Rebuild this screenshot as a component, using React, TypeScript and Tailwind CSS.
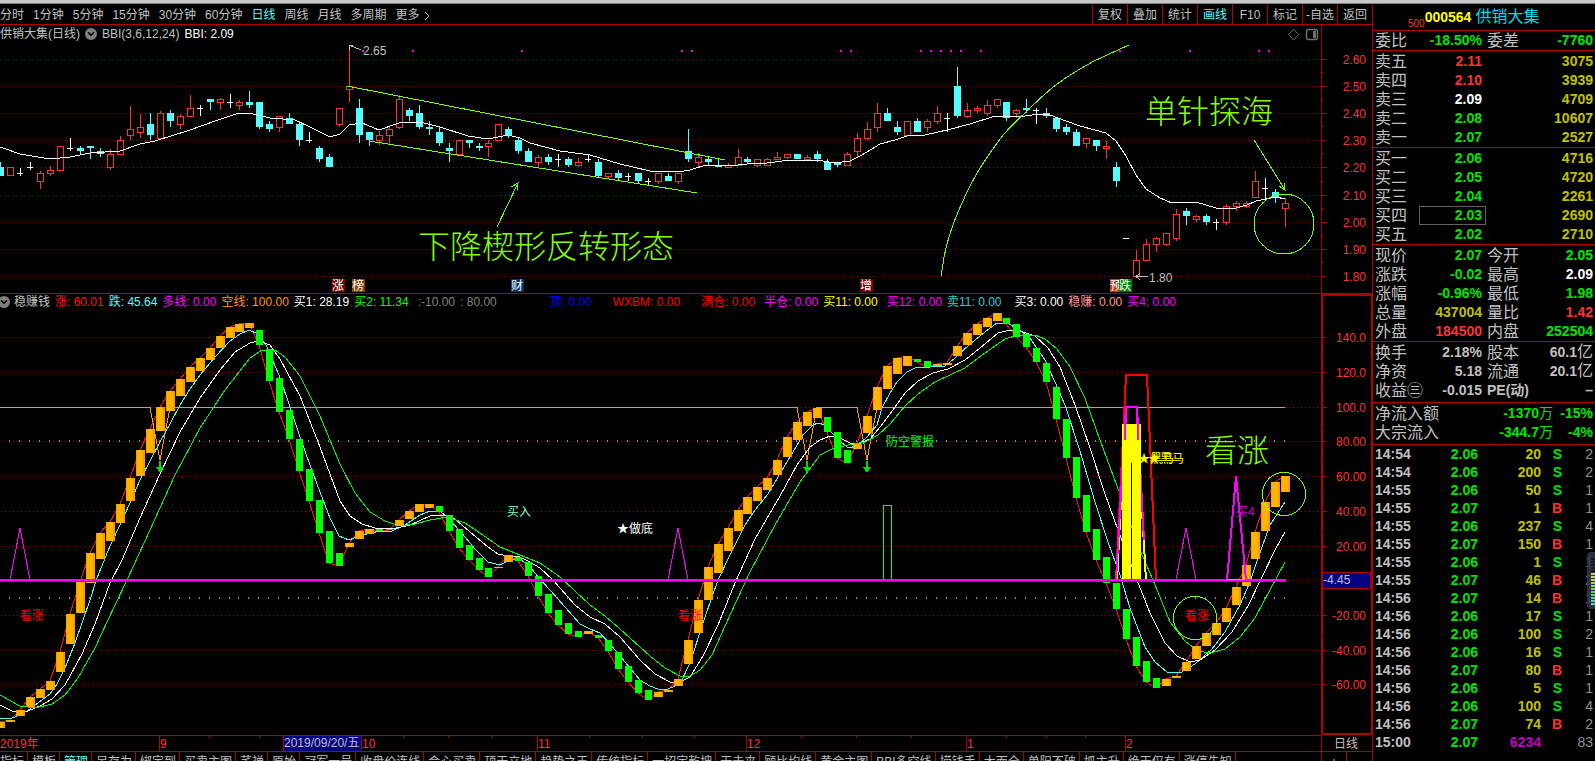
import { ChevronDown } from "lucide-react";

type CandleKind = "up" | "down" | "flat";
// high, body top, body bottom, low (chart pixels)
type Candle = [number, number, number, number, CandleKind];
// top, bottom, rising
type Bar = [number, number, boolean];

const U: CandleKind = "up";
const D: CandleKind = "down";
const F: CandleKind = "flat";

const candles: Candle[] = [
  [162, 167, 176, 176, D], [167, 167, 176, 176, U], [168, 173, 173, 176, F], [162, 167, 167, 170, F],
  [171, 173, 182, 189, U], [166, 170, 174, 176, U], [146, 146, 171, 171, U], [138, 148, 148, 151, F],
  [146, 148, 151, 154, D], [146, 146, 148, 159, D], [148, 151, 154, 157, D], [149, 154, 168, 170, U],
  [136, 140, 155, 155, U], [106, 129, 136, 140, U], [114, 127, 133, 138, U], [113, 124, 135, 140, D],
  [111, 113, 139, 139, U], [110, 113, 121, 127, D], [114, 116, 125, 129, U], [95, 108, 117, 117, U],
  [105, 108, 108, 116, F], [99, 99, 102, 110, D], [98, 99, 103, 110, U], [94, 102, 102, 108, F],
  [100, 102, 106, 110, U], [91, 102, 105, 108, D], [102, 102, 127, 129, D], [121, 124, 129, 132, D],
  [116, 116, 128, 132, U], [113, 118, 124, 124, D], [121, 124, 140, 146, D], [132, 140, 140, 143, F],
  [146, 148, 159, 162, D], [154, 157, 167, 167, D], [108, 108, 125, 127, U], [47, 86, 90, 102, U],
  [99, 108, 135, 143, D], [132, 132, 140, 146, D], [131, 135, 141, 145, U], [127, 129, 136, 145, U],
  [95, 99, 128, 129, U], [108, 110, 116, 121, D], [105, 113, 127, 129, D], [121, 127, 129, 135, D],
  [127, 132, 143, 146, D], [143, 148, 151, 162, D], [140, 140, 155, 155, U], [140, 140, 143, 148, D],
  [143, 146, 148, 151, D], [140, 143, 147, 157, U], [124, 124, 141, 141, U], [127, 129, 135, 138, D],
  [137, 140, 151, 154, D], [148, 151, 162, 162, D], [155, 157, 163, 167, U], [154, 157, 162, 165, D],
  [154, 159, 159, 167, F], [157, 159, 165, 167, D], [158, 162, 166, 167, U], [154, 159, 159, 162, F],
  [159, 162, 176, 177, D], [173, 173, 177, 178, U], [170, 173, 178, 181, D], [173, 176, 176, 181, F],
  [173, 173, 181, 184, D], [178, 181, 181, 186, F], [173, 173, 182, 184, U], [173, 176, 181, 181, D],
  [173, 173, 182, 184, U], [129, 151, 159, 162, D], [153, 157, 163, 167, U], [157, 159, 162, 166, D],
  [159, 165, 167, 167, D], [163, 165, 168, 168, U], [149, 157, 166, 166, U], [157, 159, 162, 164, D],
  [159, 159, 166, 167, U], [158, 159, 166, 166, U], [152, 157, 160, 160, U], [154, 154, 158, 159, U],
  [154, 154, 159, 159, D], [155, 157, 160, 161, U], [151, 154, 159, 162, D], [159, 162, 170, 170, D],
  [162, 162, 165, 167, D], [152, 154, 166, 166, U], [133, 138, 152, 157, U], [122, 129, 139, 140, U],
  [103, 113, 128, 132, U], [108, 113, 121, 121, D], [121, 127, 132, 135, D], [121, 121, 136, 136, U],
  [118, 121, 132, 132, D], [119, 121, 128, 132, U], [106, 113, 122, 124, U], [113, 118, 118, 132, F],
  [67, 86, 116, 118, D], [103, 110, 117, 118, U], [106, 108, 111, 113, U], [100, 105, 114, 116, U],
  [99, 99, 106, 108, U], [102, 102, 118, 121, D], [109, 110, 114, 118, U], [99, 108, 110, 113, D],
  [108, 110, 110, 124, F], [108, 113, 116, 118, D], [118, 118, 129, 132, D], [124, 127, 132, 135, D],
  [129, 132, 146, 146, D], [138, 138, 144, 148, U], [140, 140, 146, 151, D], [141, 146, 149, 159, U],
  [162, 167, 181, 187, D], [238, 238, 238, 239, F], [250, 260, 277, 277, U], [239, 244, 261, 261, U],
  [237, 238, 245, 252, U], [233, 233, 245, 246, U], [209, 214, 239, 241, U], [208, 211, 216, 225, D],
  [215, 216, 220, 222, U], [214, 216, 222, 225, D], [219, 222, 222, 230, F], [204, 206, 223, 225, U],
  [201, 203, 207, 211, U], [201, 203, 207, 208, U], [171, 181, 198, 198, U], [178, 188, 188, 200, F],
  [189, 192, 197, 203, D], [198, 203, 209, 227, U],
];

const o = true;
const g = false;

const bars: Bar[] = [
  [722, 728, o], [720, 722, o], [710, 716, o], [697, 707, o], [689, 698, o], [681, 690, o], [652, 672, o],
  [614, 644, o], [582, 613, o], [553, 583, o], [533, 559, o], [522, 541, o], [504, 523, o], [478, 501, o],
  [450, 476, o], [429, 453, o], [407, 431, o], [391, 411, o], [379, 396, o], [367, 382, o], [358, 371, o],
  [348, 360, o], [336, 348, o], [327, 338, o], [324, 332, o], [323, 328, o], [330, 345, g], [349, 381, g],
  [378, 412, g], [410, 439, g], [439, 471, g], [469, 501, g], [500, 533, g], [531, 563, g], [553, 566, g],
  [543, 547, o], [531, 539, o], [529, 534, o], [529, 531, g], [529, 530, g], [520, 526, o], [511, 519, o],
  [504, 512, o], [504, 508, o], [506, 512, g], [515, 531, g], [529, 548, g], [545, 560, g], [558, 570, g],
  [568, 577, g], [567, 568, o], [555, 562, o], [557, 561, g], [562, 576, g], [576, 596, g], [594, 613, g],
  [610, 625, g], [623, 634, g], [631, 637, g], [631, 634, o], [635, 638, g], [640, 651, g], [652, 669, g],
  [666, 682, g], [680, 693, g], [690, 700, g], [692, 697, o], [690, 692, o], [679, 686, o], [640, 664, o],
  [600, 633, o], [567, 600, o], [544, 573, o], [528, 551, o], [510, 531, o], [497, 514, o], [487, 501, o],
  [478, 490, o], [460, 475, o], [437, 457, o], [422, 440, o], [412, 426, o], [408, 418, o], [417, 432, g],
  [432, 458, g], [450, 463, g], [444, 449, o], [416, 433, o], [387, 410, o], [366, 389, o], [358, 374, o],
  [356, 366, o], [359, 362, g], [361, 367, g], [364, 366, o], [363, 365, o], [346, 356, o], [333, 345, o],
  [324, 335, o], [318, 327, o], [313, 321, o], [318, 324, g], [324, 337, g], [334, 347, g], [348, 362, g],
  [363, 382, g], [387, 419, g], [419, 458, g], [457, 498, g], [495, 532, g], [529, 560, g], [557, 583, g],
  [583, 609, g], [609, 639, g], [637, 666, g], [661, 682, g], [678, 688, g], [679, 686, o], [676, 678, o],
  [662, 671, o], [646, 659, o], [633, 646, o], [623, 635, o], [608, 622, o], [587, 605, o], [565, 586, o],
  [532, 559, o], [502, 531, o], [482, 507, o], [476, 492, o],
];

const bbiLine =
  "0,147 20,154 50,159 70,157 90,153 120,151 140,144 155,141 190,130 215,121 239,113 249,113 270,118 295,120 310,127 330,137 340,134 349,125 362,123 379,130 399,123 420,122 440,127 468,136 488,139 508,135 520,138 530,143 560,151 590,155 620,164 650,171 678,172 690,170 706,165 730,166 747,164 767,163 790,160 817,160 835,163 850,161 862,155 880,144 895,140 907,136 925,135 947,130 970,124 995,116 1025,116 1040,114 1050,115 1066,121 1080,126 1106,133 1116,141 1126,156 1136,175 1146,189 1160,198 1172,203 1196,202 1216,208 1236,208 1247,205 1256,201 1276,197 1285,199";

const fastLine =
  "0,718 12,718 20,715 30,709 50,694 57,684 65,668 75,643 90,600 97,578 110,546 120,525 130,503 140,480 150,461 160,442 170,424 180,405 190,389 200,375 215,357 230,341 240,334 249,330 258,334 266,345 279,375 290,407 300,437 310,465 320,492 330,518 339,536 349,540 362,535 380,531 392,531 405,525 420,515 430,511 440,511 447,517 460,531 475,549 488,562 500,565 510,560 520,559 530,567 540,579 550,590 565,607 580,624 590,629 600,633 610,644 625,662 640,680 650,686 658,689 668,689 680,684 690,663 705,617 718,580 730,555 745,525 755,510 768,494 778,477 790,457 803,435 813,425 818,423 825,425 832,433 840,441 848,448 857,446 867,437 877,425 882,408 890,393 897,382 907,372 915,368 945,366 955,358 970,344 985,332 997,323 1007,323 1018,329 1030,338 1045,360 1055,382 1065,405 1080,451 1095,502 1108,542 1120,575 1130,608 1145,647 1155,662 1167,672 1180,673 1195,664 1212,649 1225,632 1240,605 1250,582 1258,558 1270,525 1285,502";

const midLine =
  "0,705 12,711 28,711 40,706 52,699 65,685 82,654 95,624 110,583 122,560 140,518 160,474 180,432 200,398 220,370 235,352 250,343 258,341 270,345 280,359 300,396 320,447 340,501 350,516 362,524 375,528 392,529 410,525 430,516 445,515 455,519 470,532 488,547 498,554 508,556 518,556 530,562 540,568 553,580 575,605 590,617 605,624 620,637 640,660 655,674 670,682 680,682 690,677 703,656 718,625 735,583 755,539 780,496 797,465 810,447 820,440 830,436 840,438 850,443 860,443 870,439 880,427 890,414 905,393 918,381 933,373 948,369 965,360 980,348 998,333 1010,330 1020,331 1035,336 1048,348 1060,367 1075,405 1090,448 1105,494 1118,530 1135,575 1150,613 1165,643 1177,656 1190,662 1200,660 1215,650 1232,632 1248,606 1262,577 1275,550 1285,532";

const slowLine =
  "0,695 20,706 35,708 52,704 65,695 78,678 95,648 115,605 128,578 150,530 175,475 200,428 225,390 250,358 262,350 275,350 285,357 300,376 320,416 340,464 355,493 370,512 385,521 400,526 415,524 430,520 447,517 465,523 480,533 500,547 520,555 540,563 560,577 590,605 605,616 620,629 650,656 665,668 680,676 690,676 700,670 712,655 730,615 750,572 775,525 800,482 820,455 832,449 848,445 865,442 878,435 890,424 905,406 918,394 935,382 950,375 965,368 985,353 1005,339 1018,335 1035,335 1045,339 1057,349 1070,367 1085,398 1100,440 1120,494 1140,550 1153,580 1170,622 1185,641 1198,651 1210,653 1225,649 1240,637 1255,618 1270,590 1285,562";

const priceAxis: [string, number][] = [
  ["2.60", 59], ["2.50", 86], ["2.40", 113], ["2.30", 140], ["2.20", 167],
  ["2.10", 195], ["2.00", 222], ["1.90", 249], ["1.80", 276],
];

const indicatorAxis: [string, number][] = [
  ["140.0", 337], ["120.0", 372], ["100.0", 407], ["80.00", 441], ["60.00", 476],
  ["40.00", 511], ["20.00", 546], ["-20.00", 615], ["-40.00", 650], ["-60.00", 684],
];

const signalDots = [362, 412, 521, 681, 691, 840, 850, 920, 930, 940, 950, 960, 980, 1119, 1189, 1258, 1268];

const newsTags = [
  { text: "涨", x: 332, fill: "#800000" },
  { text: "榜", x: 352, fill: "#804000" },
  { text: "财", x: 511, fill: "#003366" },
  { text: "增", x: 860, fill: "#800000" },
  { text: "预", x: 1110, fill: "#c04000" },
  { text: "跌", x: 1119, fill: "#008000" },
];

const months: [string, number][] = [["9", 159], ["10", 361], ["11", 537], ["12", 746], ["1", 966], ["2", 1125]];
const weekTicks = [209, 259, 403, 448, 492, 589, 642, 694, 801, 856, 911, 1006, 1046, 1085];

const legend = [
  { text: "涨: 60.01", style: "text-[#ff1414]" },
  { text: "跌: 45.64", style: "text-[#54fcfc]" },
  { text: "多线: 0.00", style: "text-[#ff00ff]" },
  { text: "空线: 100.00", style: "text-[#ff9900]" },
  { text: "买1: 28.19", style: "text-white" },
  { text: "买2: 11.34", style: "text-[#00ff00]" },
  { text: ":-10.00", style: "text-[#808080] ml-1" },
  { text: ": 80.00", style: "text-[#808080]" },
  { text: "顶: 0.00", style: "text-[#0000ff] ml-12" },
  { text: "WXBM: 0.00", style: "text-[#ff0000] ml-4" },
  { text: "满仓: 0.00", style: "text-[#ff0000] ml-4" },
  { text: "半仓: 0.00", style: "text-[#ff00ff] ml-1" },
  { text: "买11: 0.00", style: "text-[#ffff00]" },
  { text: "买12: 0.00", style: "text-[#ff00ff] ml-1" },
  { text: "卖11: 0.00", style: "text-[#33cccc]" },
  { text: "买3: 0.00", style: "text-white ml-2" },
  { text: "稳赚: 0.00", style: "text-[#ff9a9a]" },
  { text: "买4: 0.00", style: "text-[#ff00ff]" },
];

const periods = ["分时", "1分钟", "5分钟", "15分钟", "30分钟", "60分钟", "日线", "周线", "月线", "多周期", "更多"];
const tools = ["复权", "叠加", "统计", "画线", "F10", "标记", "-自选", "返回"];
const templates = [
  "指标", "模板", "管理", "另存为", "绑定到", "买卖主图", "芊禅", "原始", "冠军一号", "收盘价连线", "会心买卖",
  "顶天立地", "趋势之王", "传统指标", "一招定乾坤", "无未来", "顾比均线", "黄金主图", "BBI多空线", "捞钱手",
  "大而全", "单阳不破", "抓主升", "绝天仅有", "涨停先知",
];

const RED = "text-[#ff3232]";
const GREEN = "text-[#00e600]";
const WHITE = "text-white";
const YELLOW = "text-[#c0c000]";
const GRAY = "text-[#c0c0c0]";

const asks = [
  ["卖五", "2.11", "3075", RED],
  ["卖四", "2.10", "3939", RED],
  ["卖三", "2.09", "4709", WHITE],
  ["卖二", "2.08", "10607", GREEN],
  ["卖一", "2.07", "2527", GREEN],
];
const bids = [
  ["买一", "2.06", "4716", GREEN],
  ["买二", "2.05", "4720", GREEN],
  ["买三", "2.04", "2261", GREEN],
  ["买四", "2.03", "2690", GREEN],
  ["买五", "2.02", "2710", GREEN],
];

const balance = [["委比", "-18.50%", GREEN, "委差", "-7760", GREEN]];
const quote = [
  ["现价", "2.07", GREEN, "今开", "2.05", GREEN],
  ["涨跌", "-0.02", GREEN, "最高", "2.09", WHITE],
  ["涨幅", "-0.96%", GREEN, "最低", "1.98", GREEN],
  ["总量", "437004", YELLOW, "量比", "1.42", RED],
  ["外盘", "184500", RED, "内盘", "252504", GREEN],
];
const finance = [
  ["换手", "2.18%", GRAY, "股本", "60.1亿", GRAY],
  ["净资", "5.18", GRAY, "流通", "20.1亿", GRAY],
  ["收益㊂", "-0.015", GRAY, "PE(动)", "–", GRAY],
];

const ticks = [
  ["14:54", "2.06", "20", "S", "2"],
  ["14:54", "2.06", "200", "S", "2"],
  ["14:55", "2.06", "50", "S", "1"],
  ["14:55", "2.07", "1", "B", "1"],
  ["14:55", "2.06", "237", "S", "4"],
  ["14:55", "2.07", "150", "B", "1"],
  ["14:55", "2.06", "1", "S", "1"],
  ["14:55", "2.07", "46", "B", "2"],
  ["14:56", "2.07", "14", "B", "1"],
  ["14:56", "2.06", "17", "S", "1"],
  ["14:56", "2.06", "100", "S", "2"],
  ["14:56", "2.06", "16", "S", "1"],
  ["14:56", "2.07", "80", "B", "1"],
  ["14:56", "2.06", "5", "S", "1"],
  ["14:56", "2.06", "100", "S", "4"],
  ["14:56", "2.07", "74", "B", "2"],
  ["15:00", "2.07", "6234", "", "83"],
];

const xAt = (i: number) => Math.round(0.4 + 9.961 * i);

const CandleShape = ({ index, candle }: { index: number; candle: Candle }) => {
  const [high, top, bottom, low, kind] = candle;
  const x = xAt(index);
  if (kind === "flat") {
    return (
      <g fill="#ffffff">
        <rect x={x} y={high} width="1" height={low - high} />
        <rect x={x - 3} y={top} width="6" height="1" />
      </g>
    );
  }
  if (kind === "down") {
    return (
      <g fill="#54fcfc">
        <rect x={x} y={high} width="1" height={low - high} />
        <rect x={x - 3} y={top} width="7" height={bottom - top} />
      </g>
    );
  }
  return (
    <g>
      <rect x={x} y={high} width="1" height={low - high} fill="#ff3232" />
      <rect x={x - 2.5} y={top + 0.5} width="6" height={Math.max(bottom - top - 1, 1)} fill="#000000" stroke="#ff3232" />
    </g>
  );
};

const Grid = ({ rows }: { rows: number[] }) => (
  <g stroke="#b00000" strokeDasharray="1 3">
    {rows.map((y) => (
      <line key={y} x1="1" x2="1320" y1={y + 0.5} y2={y + 0.5} />
    ))}
  </g>
);

const AxisLabels = ({ items }: { items: [string, number][] }) => (
  <g>
    {items.map(([label, y]) => (
      <g key={label}>
        <rect x="1322" y={y} width="5" height="1" fill="#b00000" />
        <text x="1366" y={y + 5} textAnchor="end" fill="#ff3232">{label}</text>
      </g>
    ))}
  </g>
);

const CollapseIcon = () => (
  <button aria-label="展开" className="flex h-3 w-3 shrink-0 items-center justify-center rounded-full bg-[#808080] text-black">
    <ChevronDown className="h-2.5 w-2.5" strokeWidth={4} />
  </button>
);

const PriceChart = () => (
  <div className="relative border-b border-[#b00000]">
    <svg viewBox="0 25 1372 268" className="block w-full text-[12px]" shapeRendering="crispEdges">
      <Grid rows={priceAxis.map(([, y]) => y)} />
      {candles.map((c, i) => (
        <CandleShape key={i} index={i} candle={c} />
      ))}
      <polyline points={bbiLine} fill="none" stroke="#ffffff" />
      {signalDots.map((x) => (
        <rect key={x} x={x} y="50" width="2" height="2" fill="#ff00ff" />
      ))}

      {/* drawing tools */}
      <g fill="none" stroke="#80ff00">
        <path d="M347 86L725 160M369 141L697 193" />
        <path d="M497 227L518 183M511 187L518 183L517 190" />
        <path d="M941 276Q943 264 944 257Q948 238 954 222Q960 207 967 192Q973 180 980 168Q991 151 1003 135Q1014 123 1027 111Q1040 98 1053 87Q1066 77 1080 69Q1093 61 1107 55L1129 45" />
        <path d="M1254 140L1285 190M1279 186L1285 190L1284 183" />
        <circle cx="1284" cy="224" r="30" />
      </g>
      <g fill="#80ff00" className="text-[32px] font-light">
        <text x="418" y="258">下降楔形反转形态</text>
        <text x="1145" y="123">单针探海</text>
      </g>

      <g fill="none" stroke="#c0c0c0">
        <path d="M349 45L361 50M349 50V45H353" />
        <path d="M1136 276.5H1148M1140 273L1136 276.5L1140 280" />
      </g>
      <text x="363" y="55" fill="#c0c0c0">2.65</text>
      <text x="1149" y="282" fill="#c0c0c0">1.80</text>

      {newsTags.map((tag) => (
        <g key={tag.x}>
          <rect x={tag.x} y="279" width="13" height="13" fill={tag.fill} />
          <text x={tag.x} y="290" fill="#ffffff">{tag.text}</text>
        </g>
      ))}

      <g fill="none" stroke="#707070" shapeRendering="auto">
        <path d="M1293.5 29L1298.5 34.5L1293.5 40L1288.5 34.5Z" />
        <rect x="1306.5" y="29.5" width="11" height="10" rx="2" strokeWidth="1.5" />
        <rect x="1313" y="31" width="3" height="7" fill="#707070" stroke="none" />
      </g>

      <rect x="1321" y="25" width="1" height="268" fill="#b00000" />
      {[72, 99, 126, 153, 181, 208, 235, 262].map((y) => (
        <rect key={y} x="1322" y={y} width="2" height="1" fill="#b00000" />
      ))}
      <AxisLabels items={priceAxis} />
    </svg>
    <div className="absolute left-0 top-0 flex h-[18px] items-center gap-[5px] whitespace-nowrap text-[#c0c0c0]">
      <span>供销大集(日线)</span>
      <CollapseIcon />
      <span>BBI(3,6,12,24)</span>
      <span className="text-white">BBI: 2.09</span>
    </div>
  </div>
);

const IndicatorChart = () => (
  <div className="relative">
    <svg viewBox="0 294 1372 441" className="block w-full text-[12px]" shapeRendering="crispEdges">
      <Grid rows={[...indicatorAxis.map(([, y]) => y), 580]} />
      <g fill="#909090">
        {candles.slice(1).map((_, i) => (
          <g key={i}>
            <rect x={xAt(i + 1) - 1} y="440" width="1" height="2" />
            <rect x={xAt(i + 1) - 1} y="597" width="1" height="2" />
          </g>
        ))}
      </g>

      <polyline
        points={bars.map(([top, bottom, rising], i) => `${xAt(i)},${rising ? top : bottom}`).join(" ")}
        fill="none"
        stroke="#ff1414"
      />
      <path
        d="M0 407.5H150L160 460L170 407.5H797L807 460L817 407.5H857L867 460L877 407.5H1285"
        fill="none"
        stroke="#ff9900"
      />
      <polyline points={fastLine} fill="none" stroke="#54fcfc" />
      <polyline points={midLine} fill="none" stroke="#ffffff" />
      <polyline points={slowLine} fill="none" stroke="#00ff00" />

      {bars.map(([top, bottom, rising], i) =>
        rising ? (
          <g key={i}>
            <rect x={xAt(i) - 4} y={top} width="9" height={bottom - top} fill="#ff9900" />
            <rect x={xAt(i) - 3} y={top} width="6" height={bottom - top} fill="#ffb400" />
          </g>
        ) : (
          <rect key={i} x={xAt(i) - 3} y={top} width="7" height={bottom - top} fill="#00ff00" />
        )
      )}

      <g fill="#00dc00">
        {[160, 807, 867].map((x) => (
          <path key={x} d={`M${x - 1} 461h2v6h3l-4 6l-4 -6h3z`} />
        ))}
      </g>

      {/* dark horse signal */}
      <g fill="none" strokeWidth="2">
        <path d="M1116 580L1126 375H1147L1156 580" stroke="#ff0000" />
        <path d="M1117 580L1124 440M1138 440L1146 580" stroke="#ffff00" />
        <path d="M1116 580L1126 407H1137L1144 540" stroke="#ff00ff" />
      </g>
      <path d="M1122 424H1141V580H1132V463H1131V580H1122Z" fill="#ffff00" />
      <path d="M1125 440L1126 407H1137L1138 440" fill="none" stroke="#ff00ff" strokeWidth="2" />

      <rect x="883.5" y="505.5" width="8" height="74" fill="none" stroke="#00ff00" />
      <g fill="none" stroke="#ff00ff">
        <path d="M10 580L20 528L30 580M668 580L678 528L688 580M1176 580L1186 528L1196 580" />
        <path d="M1227 580L1236 476L1246 580" strokeWidth="2" />
      </g>
      <rect x="0" y="579" width="1286" height="2" fill="#ff00ff" />
      <rect x="0" y="581" width="1286" height="1" fill="#ff0000" />
      <rect x="1227" y="579" width="18" height="1" fill="#a0b0a0" />

      <g fill="none" stroke="#80ff00">
        <circle cx="1284" cy="494" r="21.5" />
        <circle cx="1195" cy="618" r="21.5" />
      </g>
      <text x="1205" y="462" fill="#80ff00" className="text-[32px] font-light">看涨</text>

      <text x="507" y="516" fill="#80ffc0">买入</text>
      <text x="617" y="533" fill="#ffffff">★做底</text>
      <text x="886" y="446" fill="#00ff00">防空警报</text>
      <text x="1138" y="463" fill="#ffff00">★黑马</text>
      <text x="1148" y="463" fill="#ffff00">★黑马</text>
      <text x="1236" y="516" fill="#d000d0">买4</text>
      <g fill="#ff0000">
        <text x="20" y="620">看涨</text>
        <text x="678" y="620">看涨</text>
        <text x="1185" y="620">看涨</text>
      </g>

      <rect x="1322" y="295" width="50" height="439" fill="none" stroke="#b00000" strokeWidth="2" />
      {[355, 389, 424, 459, 494, 528, 563, 598, 632, 667].map((y) => (
        <rect key={y} x="1323" y={y} width="1" height="1" fill="#b00000" />
      ))}
      <AxisLabels items={indicatorAxis} />
      <rect x="1322.5" y="572.5" width="48" height="16" fill="#000080" stroke="#b00000" />
      <text x="1323" y="584" fill="#c0c0c0">-4.45</text>
    </svg>
    <div className="absolute left-0 top-0 flex h-4 items-center gap-[5px] whitespace-nowrap">
      <div className="-ml-0.5 flex items-center gap-1 text-[#c0c0c0]">
        <CollapseIcon />
        <span>稳赚钱</span>
      </div>
      {legend.map((item) => (
        <span key={item.text} className={item.style}>{item.text}</span>
      ))}
    </div>
  </div>
);

const TimeAxis = () => (
  <svg viewBox="0 735 1372 16" className="block w-full text-[12px]" shapeRendering="crispEdges">
    <rect x="0" y="735" width="1322" height="1" fill="#b00000" />
    <rect x="1321" y="735" width="1" height="16" fill="#b00000" />
    {weekTicks.map((x) => (
      <rect key={x} x={x} y="736" width="1" height="2" fill="#b00000" />
    ))}
    <text x="0" y="748" fill="#ff3232">2019年</text>
    {months.map(([label, x]) => (
      <g key={label}>
        <rect x={x} y="735" width="1" height="16" fill="#b00000" />
        <text x={x + 1} y="748" fill="#ff3232">{label}</text>
      </g>
    ))}
    <rect x="283.5" y="735.5" width="78" height="16" fill="#000080" stroke="#b00000" />
    <text x="284" y="747" fill="#c0c0c0">2019/09/20/五</text>
    <text x="1334" y="748" fill="#c0c0c0">日线</text>
  </svg>
);

const Toolbar = () => (
  <div className="flex h-[21px] items-stretch justify-between border-b border-[#b00000] text-[#c0c0c0]">
    <nav className="flex items-center gap-[9px] whitespace-nowrap pt-0.5">
      {periods.map((p) => (
        <button key={p} className={p === "日线" ? "text-[#54fcfc]" : ""}>
          {p}
          {p === "更多" && (
            <svg viewBox="0 0 6 10" className="ml-1 inline h-2.5 w-1.5" fill="none" stroke="currentColor">
              <path d="M1 1L5 5L1 9" />
            </svg>
          )}
        </button>
      ))}
    </nav>
    <div className="flex whitespace-nowrap">
      {tools.map((t) => (
        <button
          key={t}
          className={`w-[35px] border-l border-[#b00000] pt-0.5 text-center ${t === "画线" ? "text-[#54fcfc]" : ""}`}
        >
          {t}
        </button>
      ))}
    </div>
  </div>
);

const TemplateBar = () => (
  <div className="flex h-5 justify-between border-t border-[#b00000] leading-[18px] text-[#c0c0c0]">
    <div className="-ml-1 flex min-w-0 whitespace-nowrap">
      {templates.map((t) => (
        <button key={t} className={`border-r border-[#b00000] pl-1 pr-[3px] ${t === "管理" ? "text-[#54fcfc]" : ""}`}>
          {t}
        </button>
      ))}
    </div>
    <div className="flex shrink-0">
      <button className="w-[25px] border-l border-[#b00000]">+</button>
      <button className="w-[26px] border-l border-[#b00000]">−</button>
    </div>
  </div>
);

const BookTable = ({ rows }: { rows: string[][] }) => (
  <table className="w-full table-fixed border-collapse">
    <tbody>
      {rows.map(([label, price, volume, color]) => (
        <tr key={label} className="h-[19px] leading-[19px]">
          <td className="w-[50px] text-base leading-[19px] text-[#c0c0c0]">{label}</td>
          <td className={`relative w-[57px] text-right font-bold ${color}`}>
            {price}
            {label === "买四" && <span className="absolute -left-1.5 -right-1 inset-y-0 border border-[#606060]" />}
          </td>
          <td className="text-right font-bold text-[#c0c000]">{volume}</td>
        </tr>
      ))}
    </tbody>
  </table>
);

const PairTable = ({ rows }: { rows: string[][] }) => (
  <table className="w-full table-fixed border-collapse">
    <tbody>
      {rows.map(([l1, v1, c1, l2, v2, c2]) => (
        <tr key={l1} className="h-[19px] whitespace-nowrap leading-[19px]">
          <td className="w-[50px] text-base leading-[19px] text-[#c0c0c0]">{l1}</td>
          <td className={`w-[57px] text-right font-bold ${c1}`}>{v1}</td>
          {l2.startsWith("PE") ? (
            <td className="w-[50px] pl-[5px] font-bold text-[#c0c0c0]">{l2}</td>
          ) : (
            <td className="w-[50px] pl-[5px] text-base leading-[19px] text-[#c0c0c0]">{l2}</td>
          )}
          <td className={`text-right font-bold ${c2}`}>
            {v2.replace("亿", "")}
            {v2.endsWith("亿") && <span className="text-base font-normal leading-none">亿</span>}
          </td>
        </tr>
      ))}
    </tbody>
  </table>
);

const FlowTable = () => (
  <table className="w-full table-fixed border-collapse">
    <tbody>
      {[
        ["净流入额", "-1370", "-15%"],
        ["大宗流入", "-344.7", "-4%"],
      ].map(([label, amount, percent]) => (
        <tr key={label} className="h-[19px] whitespace-nowrap font-bold leading-[19px] text-[#00e600]">
          <td className="w-[70px] text-base font-normal leading-[19px] text-[#c0c0c0]">{label}</td>
          <td className="w-[108px] text-right">
            {amount}
            <span className="font-normal">万</span>
          </td>
          <td className="text-right">{percent}</td>
        </tr>
      ))}
    </tbody>
  </table>
);

const TickTable = () => (
  <table className="w-full table-fixed border-collapse">
    <tbody>
      {ticks.map(([time, price, volume, side, count], i) => (
        <tr key={i} className="h-[18px] font-bold leading-[18px]">
          <td className="w-[50px] text-[#c0c0c0]">{time}</td>
          <td className="w-[53px] text-right text-[#00e600]">{price}</td>
          <td className={`w-[63px] text-right ${side ? "text-[#c0c000]" : "text-[#c000c0]"}`}>{volume}</td>
          <td className={`w-[21px] text-right ${side === "B" ? "text-[#ff3232]" : "text-[#00e600]"}`}>{side}</td>
          <td className="text-right font-normal text-[#909090]">{count}</td>
        </tr>
      ))}
    </tbody>
  </table>
);

// small level meter docked on the right edge
const LevelMeter = () => (
  <div className="absolute right-0 top-[548px] flex h-[57px] w-2 flex-col items-end gap-px rounded-l bg-[#30344a]/90 pt-1.5">
    {Array.from({ length: 16 }, (_, i) => (
      <div
        key={i}
        className="h-0.5 w-1 shrink-0"
        style={{ backgroundColor: i < 5 ? "#15171f" : `hsl(${55 + (i - 5) * 11} 60% 60%)` }}
      />
    ))}
  </div>
);

const QuotePanel = () => (
  <aside className="relative w-[223px] shrink-0 border-l border-[#b00000] text-[14px]">
    <div className="flex h-[27px] items-center border-b border-[#b00000] pl-[35px] leading-5">
      <span className="self-end text-[10px] leading-3 text-[#ff3232]">500</span>
      <span className="font-bold text-[#ffff00]">000564</span>
      <span className="pl-1 text-base leading-5 text-[#00dcf0]">供销大集</span>
    </div>
    <div className="border-b border-[#b00000] px-0.5">
      <PairTable rows={balance} />
    </div>
    <div className="border-b border-[#b00000] px-0.5 pt-px">
      <BookTable rows={asks} />
    </div>
    <div className="border-b border-[#b00000] px-0.5 pt-px">
      <BookTable rows={bids} />
    </div>
    <div className="border-b border-[#b00000] px-0.5 pt-px">
      <PairTable rows={quote} />
    </div>
    <div className="border-b border-[#b00000] px-0.5 pt-px pb-0.5">
      <PairTable rows={finance} />
    </div>
    <div className="border-b border-[#b00000] px-0.5 pt-px pb-0.5">
      <FlowTable />
    </div>
    <div className="px-0.5">
      <TickTable />
    </div>
    <LevelMeter />
  </aside>
);

export default function App() {
  return (
    <div className="flex h-screen w-full flex-col overflow-hidden bg-black font-['Liberation_Sans','Noto_Sans_CJK_SC',sans-serif] text-[12px] leading-4">
      <div className="h-1 shrink-0 border-b border-[#808080] bg-[#c8c8c8]" />
      <div className="flex min-h-0 flex-1">
        <main className="min-w-0 flex-1">
          <Toolbar />
          <PriceChart />
          <IndicatorChart />
          <TimeAxis />
          <TemplateBar />
        </main>
        <QuotePanel />
      </div>
    </div>
  );
}
